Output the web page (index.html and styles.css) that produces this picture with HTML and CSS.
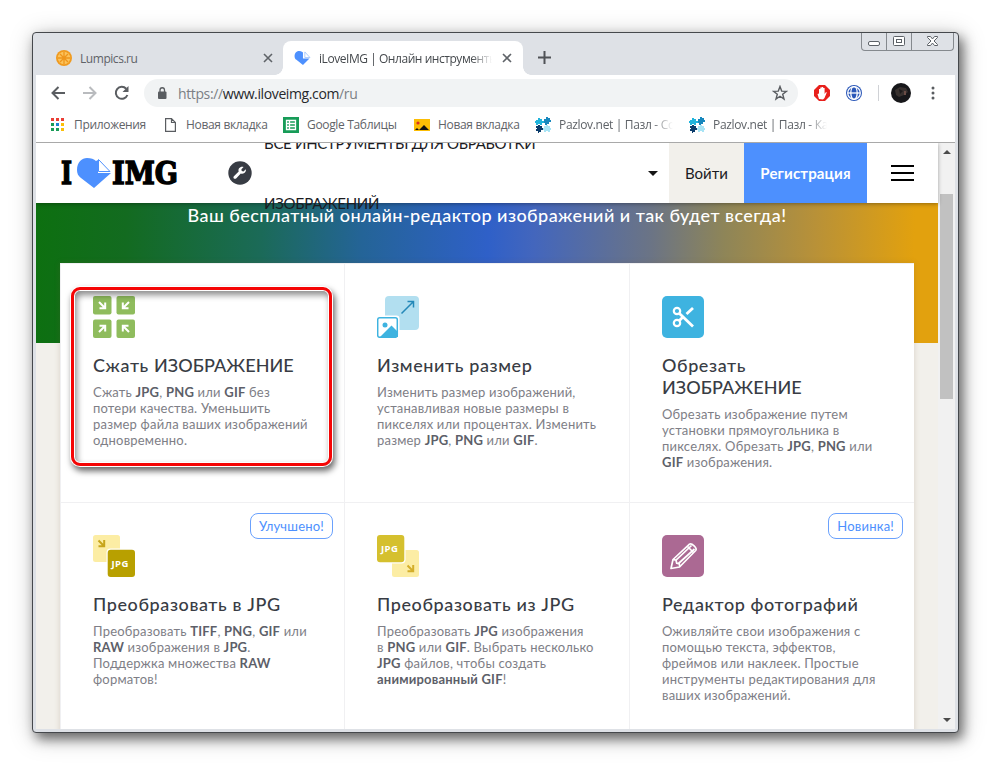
FILE: index.html
```html
<!DOCTYPE html>
<html lang="ru">
<head>
    <meta charset="UTF-8">
    <meta name="viewport" content="width=device-width, initial-scale=1.0">
    <title>iLoveIMG | Онлайн инструменты</title>
    <link rel="stylesheet" href="styles.css">
</head>
<body>
    <svg class="defs" width="0" height="0">
        <symbol id="puzzle" viewBox="0 0 16 16">
            <path fill="#1fb4dc" d="M1 3h2V1h2v1h2v2h2v2H7v2H5V7H3v1H1V6H0V4h1z"/>
            <path fill="#1787bd" d="M9 2h2V0h2v1h2v2h1v2h-2v2h-2v1h-2V6H9z"/>
            <path fill="#0b3c6b" d="M1 9h2V8h2v1h2v2h1v2H6v2H4v1H3v-2H1v-2h1v-1H1z"/>
            <path fill="#a8e4f5" d="M9 9h2V8h2v1h2v2h1v2h-1v2h-2v-1h-2v1H9v-2H8v-2h1z"/>
        </symbol>
        <symbol id="close" viewBox="0 0 10 10">
            <path d="M1 1l8 8M9 1L1 9" stroke="#5f6368" stroke-width="1.6"/>
        </symbol>
    </svg>

    <div class="window">
        <div class="controls">
            <span class="control"><svg width="24" height="17" fill="#fff" stroke="#5c6167"><rect x="6.500" y="8.500" width="11" height="4" rx="1.500"/></svg></span>
            <span class="control"><svg width="24" height="17" fill="#fff" stroke="#5c6167"><rect x="6.500" y="3.500" width="11" height="9" rx="1"/><rect x="9.500" y="6.500" width="5" height="3"/></svg></span>
            <span class="control wide"><svg width="41" height="17" fill="#fff" stroke="#5c6167"><path d="M15.500 3.500h3l2 2.500 2-2.500h3v1L22 8l3.500 3.500v1h-3l-2-2.500-2 2.500h-3v-1L19 8l-3.500-3.500z"/></svg></span>
        </div>

        <div class="tabs">
            <div class="tab">
                <svg width="16" height="16" viewBox="0 0 16 16"><circle cx="8" cy="8" r="8" fill="#f09a1f"/><circle cx="8" cy="8" r="6.200" fill="#fbc35c"/><path d="M8 2v12M2 8h12M4 4l8 8M12 4l-8 8" stroke="#ee951c" stroke-width="1.300"/></svg>
                <span class="tab-title">Lumpics.ru</span>
                <svg class="tab-close" width="10" height="10"><use href="#close"/></svg>
            </div>
            <div class="tab active">
                <svg width="17" height="14" viewBox="0 0 34 30"><path fill="#4d90fe" d="M0 11C0 4 5 0 10 0c5 0 8 3 8 3v13h14L18 30 4 19C1 17 0 14 0 11z"/><path fill="#fff" stroke="#8db8fb" stroke-width="1.500" d="M22 2v12h11z"/></svg>
                <span class="tab-title">iLoveIMG | Онлайн инструменты</span>
                <svg class="tab-close" width="10" height="10"><use href="#close"/></svg>
            </div>
            <svg class="plus" width="13" height="13"><path d="M6.500 0v13M0 6.500h13" stroke="#505357" stroke-width="2"/></svg>
        </div>

        <div class="toolbar">
            <svg class="arrow" width="14" height="14" fill="none" stroke="#5a5d61" stroke-width="2"><path d="M14 7H1.500M7.500 1l-6 6 6 6"/></svg>
            <svg class="arrow" width="14" height="14" fill="none" stroke="#b9bbbe" stroke-width="2"><path d="M0 7h12.500M6.500 1l6 6-6 6"/></svg>
            <svg class="reload" width="16" height="16" fill="none" stroke="#5a5d61" stroke-width="2"><path d="M13.400 10A6 6 0 1 1 12.200 3.700"/><path d="M14.500 1v6h-6z" fill="#5a5d61" stroke="none"/></svg>
            <div class="omnibox">
                <svg width="10" height="12" viewBox="0 0 10 12"><rect x="1" y="4.500" width="8.500" height="7.500" rx="1" fill="#5a5d61"/><path d="M3 5V3a2.200 2.200 0 0 1 4.500 0v2" fill="none" stroke="#5a5d61" stroke-width="1.300"/></svg>
                <span class="url">https://<b>www.iloveimg.com</b>/ru</span>
                <svg class="star" width="16" height="16" viewBox="0 0 16 16" fill="none" stroke="#5a5d61" stroke-width="1.400"><path d="M8 1.500l1.700 4.600 4.800.2-3.800 3 1.300 4.800L8 11.300l-4 2.800 1.300-4.800-3.800-3 4.800-.2z"/></svg>
            </div>
            <svg class="ext" width="16" height="16" viewBox="0 0 16 16"><path d="M5 0h6l5 5v6l-5 5H5l-5-5V5z" fill="#e8201c"/><path d="M5 14L3.500 9 5 8.500V4h1.300V2.500h1.500V2h1.400v1h1.400v6l1.400-2 .8.500L10.500 13 9 14.500z" fill="#fff"/></svg>
            <svg class="ext" width="16" height="16" viewBox="0 0 16 16"><circle cx="8" cy="8" r="8" fill="#2a57b8"/><g fill="none" stroke="#fff" stroke-width="1.300"><circle cx="8" cy="8" r="6.300"/><ellipse cx="8" cy="8" rx="3.200" ry="6.300"/><path d="M2 8h12"/></g></svg>
            <span class="divider"></span>
            <svg class="avatar" width="20" height="20"><circle cx="10" cy="10" r="10" fill="#17171a"/><path d="M4 7l5-3 6 1 2 4-4 3-5 2-3-2z" fill="#38312f"/><path d="M8 6l4 2-3 3z" fill="#1c1a1b"/><path d="M13 8h2v4h-2z" fill="#6a4c46"/></svg>
            <svg width="4" height="14" fill="#5a5d61"><circle cx="2" cy="2" r="1.500"/><circle cx="2" cy="7" r="1.500"/><circle cx="2" cy="12" r="1.500"/></svg>
        </div>

        <div class="bookmarks">
            <div class="bookmark apps">
                <svg width="13" height="13"><path fill="#ea3e35" d="M0 0h3v3H0zM5 0h3v3H5zM10 0h3v3h-3z"/><path fill="#1a9c58" d="M0 5h3v3H0zM0 10h3v3H0zM5 10h3v3H5z"/><path fill="#1e83d3" d="M5 5h3v3H5z"/><path fill="#fbbf09" d="M10 5h3v3h-3zM10 10h3v3h-3z"/></svg>
                <span>Приложения</span>
            </div>
            <div class="bookmark page">
                <svg width="11" height="14" fill="none" stroke="#5a5d61" stroke-width="1.200"><path d="M.6.600h5.900l3.900 3.900v8.900H.6zM6.500.600v3.900h3.900"/></svg>
                <span>Новая вкладка</span>
            </div>
            <div class="bookmark sheets">
                <svg width="16" height="16"><path fill="#179c58" d="M0 0h16v16H0z"/><path fill="none" stroke="#fff" stroke-width="1.300" d="M3.500 3.500h9v9h-9zM6.500 3.500v9M3.500 6.500h9M3.500 9.500h9"/></svg>
                <span>Google Таблицы</span>
            </div>
            <div class="bookmark pic">
                <svg width="16" height="12"><path fill="#fbbd05" d="M0 0h16v12H0z"/><circle cx="4" cy="4" r="1.600" fill="#d93025"/><path d="M1 11l2-2 2 2 5-5 5 5z" fill="#111"/></svg>
                <span>Новая вкладка</span>
            </div>
            <div class="bookmark puzzle">
                <svg width="16" height="16"><use href="#puzzle"/></svg>
                <span class="fade">Pazlov.net | Пазл - Соб</span>
            </div>
            <div class="bookmark puzzle">
                <svg width="16" height="16"><use href="#puzzle"/></svg>
                <span class="fade">Pazlov.net | Пазл - Кар</span>
            </div>
        </div>

        <div class="viewport">
            <div class="site">
                <header class="header">
                    <svg class="logo" width="120" height="32">
                        <text x="1" y="26" textLength="11" lengthAdjust="spacingAndGlyphs">I</text>
                        <path fill="#4d90fe" d="M17 12C17 4 22 0 27 0c4 0 7 1 9 3l2-1v13h13L34 30 21 20C18 18 17 15 17 12z"/>
                        <path fill="#fff" stroke="#4d90fe" d="M38.500 1.500v12l11.500 0z"/>
                        <text x="52" y="26" textLength="66" lengthAdjust="spacingAndGlyphs">IMG</text>
                    </svg>
                    <svg class="wrench" width="24" height="24" viewBox="0 0 24 24"><circle cx="12" cy="12" r="11.700" fill="#383c44"/><path fill="#fff" d="M17.800 8.200l-2.300 2.200-1.800-.3-.3-1.800 2.200-2.300c-1.700-.6-3.500 0-4.500 1.300-.7 1-.8 2.100-.4 3.200l-4.800 4.700c-.6.700-.6 1.600 0 2.200.6.600 1.500.6 2.200 0l4.700-4.800c1.200.4 2.500.2 3.500-.6 1.300-1 1.900-2.500 1.500-3.800z"/></svg>
                    <div class="all-tools">ВСЕ ИНСТРУМЕНТЫ ДЛЯ ОБРАБОТКИ<br>ИЗОБРАЖЕНИЙ</div>
                    <span class="caret"></span>
                    <a class="login">Войти</a>
                    <a class="register">Регистрация</a>
                    <div class="burger"><i></i><i></i><i></i></div>
                </header>

                <div class="hero">Ваш бесплатный онлайн-редактор изображений и так будет всегда!</div>

                <div class="tools">
                    <div class="tool">
                        <svg width="42" height="42"><g fill="#8fbc5d"><rect width="18.500" height="18.500" rx="2"/><rect x="23.500" width="18.500" height="18.500" rx="2"/><rect y="23.500" width="18.500" height="18.500" rx="2"/><rect x="23.500" y="23.500" width="18.500" height="18.500" rx="2"/></g><path d="M6 6l6 6M12.200 6.500v5.700H6.500M36 6l-6 6M29.800 6.500v5.700h5.700M6 36l6-6M12.200 35.500v-5.700H6.500M36 36l-6-6M29.800 35.500v-5.700h5.700" fill="none" stroke="#fff" stroke-width="2"/></svg>
                        <h3>Сжать <span class="caps">ИЗОБРАЖЕНИЕ</span></h3>
                        <p>Сжать <b>JPG</b>, <b>PNG</b> или <b>GIF</b> без<br>потери качества. Уменьшить<br>размер файла ваших изображений<br>одновременно.</p>
                    </div>
                    <div class="tool">
                        <svg width="42" height="42"><rect x="8" width="34" height="34" rx="4" fill="#b2dff0"/><path d="M24.500 17.500L36.500 5.500M30.500 5.500h6v6" fill="none" stroke="#2488b8" stroke-width="1.500"/><rect x="-1.500" y="19.500" width="24" height="24" rx="3" fill="#fff"/><rect x=".7" y="21.700" width="19.600" height="19.600" rx="2" fill="#fff" stroke="#3eb3e0" stroke-width="1.500"/><circle cx="8" cy="29" r="2.500" fill="#3eb3e0"/><path d="M3 41l11.500-11.500L21 36v5z" fill="#3eb3e0"/></svg>
                        <h3>Изменить размер</h3>
                        <p>Изменить размер изображений,<br>устанавливая новые размеры в<br>пикселях или процентах. Изменить<br>размер <b>JPG</b>, <b>PNG</b> или <b>GIF</b>.</p>
                    </div>
                    <div class="tool">
                        <svg width="42" height="42"><rect width="42" height="42" rx="5" fill="#3eb3e0"/><g fill="none" stroke="#fff" stroke-width="2.200"><circle cx="15" cy="15" r="3.200"/><circle cx="15" cy="27" r="3.200"/><path d="M17.200 17.300L31 30.500M17.200 24.700l4-4M24.500 18L31 12" stroke-width="2.800"/></g></svg>
                        <h3>Обрезать<br><span class="caps">ИЗОБРАЖЕНИЕ</span></h3>
                        <p>Обрезать изображение путем<br>установки прямоугольника в<br>пикселях. Обрезать <b>JPG</b>, <b>PNG</b> или<br><b>GIF</b> изображения.</p>
                    </div>
                    <div class="tool">
                        <span class="badge">Улучшено!</span>
                        <svg width="42" height="42"><rect width="27" height="27" rx="2.500" fill="#fceda4"/><path d="M5.500 5.500l5.500 5.500M11.200 5v6.200H5.500" fill="none" stroke="#c7a51c" stroke-width="2"/><rect x="13.500" y="13.500" width="30" height="30" rx="4" fill="#fff"/><rect x="14.700" y="14.700" width="27.300" height="27.300" rx="3" fill="#b8a000"/><text class="jpg" x="18.500" y="32">JPG</text></svg>
                        <h3>Преобразовать в JPG</h3>
                        <p>Преобразовать <b>TIFF</b>, <b>PNG</b>, <b>GIF</b> или<br><b>RAW</b> изображения в <b>JPG</b>.<br>Поддержка множества <b>RAW</b><br>форматов!</p>
                    </div>
                    <div class="tool">
                        <svg width="42" height="42"><rect x="15" y="15" width="27" height="27" rx="2.500" fill="#fceda4"/><path d="M30.500 30.500l5.500 5.500M36.200 30v6.200h-5.700" fill="none" stroke="#d3ae2b" stroke-width="2"/><rect x="-2" y="-2" width="30.500" height="30.500" rx="4" fill="#fff"/><rect width="27.300" height="27.300" rx="3" fill="#d5c02e"/><text class="jpg" x="4" y="17">JPG</text></svg>
                        <h3>Преобразовать из JPG</h3>
                        <p>Преобразовать <b>JPG</b> изображения<br>в <b>PNG</b> или <b>GIF</b>. Выбрать несколько<br><b>JPG</b> файлов, чтобы создать<br><b>анимированный GIF</b>!</p>
                    </div>
                    <div class="tool">
                        <span class="badge">Новинка!</span>
                        <svg width="42" height="42"><rect width="42" height="42" rx="5" fill="#ab6993"/><g fill="none" stroke="#fff" stroke-width="1.700" stroke-linejoin="round"><path d="M9 33.500l2-9L27.500 9.200c2-1.600 8.200 4 6.200 6.300L17.500 32z"/><path d="M11 24.500l3 .7.700 3 2.600.6.500 3M14 25.200L29.500 10.500M16.500 28.500L32.500 14M25.500 11.500l6 6"/></g></svg>
                        <h3>Редактор фотографий</h3>
                        <p>Оживляйте свои изображения с<br>помощью текста, эффектов,<br>фреймов или наклеек. Простые<br>инструменты редактирования для<br>ваших изображений.</p>
                    </div>
                </div>
            </div>
            <div class="scrollbar">
                <span class="up"></span>
                <span class="thumb"></span>
                <span class="down"></span>
            </div>
        </div>

        <div class="highlight"></div>
    </div>
</body>
</html>
```
FILE: styles.css
```css
* {
    box-sizing: border-box;
}
body {
    margin: 0;
    padding: 32px;
    height: 765px;
    overflow: hidden;
    background: #fff;
    font-family: "Open Sans", "Noto Sans", sans-serif;
    font-size: 12px;
    color: #5f6368;
}
svg {
    display: block;
    flex: none;
}
.defs {
    position: absolute;
}

/* Browser window */
.window {
    position: relative;
    display: flex;
    flex-direction: column;
    width: 927px;
    height: 701px;
    padding: 0 3px 3px;
    border: 1px solid #45484c;
    border-radius: 4px;
    background: #dee1e6;
    box-shadow: 4px 6px 12px rgba(0, 0, 0, 0.5), 2px 4px 24px rgba(0, 0, 0, 0.25);
}
.controls {
    position: absolute;
    top: 0;
    right: 4px;
    display: flex;
    height: 18px;
    border: 1px solid #85898e;
    border-top: 0;
    border-radius: 0 0 4px 4px;
}
.control + .control {
    border-left: 1px solid #85898e;
}
.tabs {
    display: flex;
    align-items: flex-end;
    height: 42px;
}
.tab {
    position: relative;
    display: flex;
    align-items: center;
    width: 240px;
    height: 34px;
    padding: 0 11px;
}
.tab:first-child {
    width: 247px;
    padding: 0 10px 0 20px;
}
.tab.active {
    background: #fff;
    border-radius: 8px 8px 0 0;
    color: #45494d;
}
/* flared bottom corners */
.tab.active::before,
.tab.active::after {
    content: "";
    position: absolute;
    bottom: 0;
    left: -8px;
    width: 8px;
    height: 8px;
    background: radial-gradient(circle at 0 0, transparent 7.5px, #fff 8px);
}
.tab.active::after {
    left: 100%;
    background: radial-gradient(circle at 100% 0, transparent 7.5px, #fff 8px);
}
.tab-title {
    flex: 1;
    margin: 0 10px 0 8px;
    overflow: hidden;
    white-space: nowrap;
    letter-spacing: -0.45px;
}
.active .tab-title {
    -webkit-mask-image: linear-gradient(90deg, #000 88%, transparent);
    mask-image: linear-gradient(90deg, #000 88%, transparent);
}
.plus {
    margin: 0 0 11px 15px;
}
.toolbar {
    display: flex;
    align-items: center;
    height: 36px;
    padding-left: 15px;
    background: #fff;
}
.arrow {
    margin-right: 18px;
}
.reload {
    margin: 0 14px 0 -1px;
}
.omnibox {
    display: flex;
    align-items: center;
    width: 654px;
    height: 28px;
    padding: 0 10px 0 13px;
    border-radius: 14px;
    background: #f1f3f4;
}
.url {
    flex: 1;
    margin-left: 11px;
    font-size: 14px;
    letter-spacing: -0.38px;
    color: #7b7f84;
}
.url b {
    font-weight: normal;
    color: #26282b;
}
.ext {
    margin-left: 16px;
}
.divider {
    width: 1px;
    height: 16px;
    margin: 0 12px 0 16px;
    background: #d0d2d6;
}
.avatar {
    margin-right: 20px;
}
.bookmarks {
    display: flex;
    align-items: center;
    height: 32px;
    padding: 0 0 4px 15px;
    border-bottom: 1px solid #a9a9a9;
    background: #fff;
    letter-spacing: -0.33px;
}
.bookmark {
    display: flex;
    align-items: center;
    gap: 8px;
    white-space: nowrap;
}
.apps {
    gap: 10px;
    width: 114px;
}
.page {
    gap: 10px;
    width: 118px;
}
.sheets {
    width: 131px;
}
.pic {
    width: 121px;
}
.puzzle {
    width: 154px;
}
.fade {
    width: 114px;
    overflow: hidden;
    -webkit-mask-image: linear-gradient(90deg, #000 82%, transparent);
    mask-image: linear-gradient(90deg, #000 82%, transparent);
}

/* Page */
.viewport {
    display: flex;
    flex: 1;
    min-height: 0;
    overflow: hidden;
    font-family: Lato, sans-serif;
}
.site {
    width: 902px;
    background: #f2f0eb;
}
.header {
    position: relative;
    display: flex;
    align-items: center;
    height: 60px;
    padding-left: 24px;
    background: #fff;
    color: #1b1b1f;
    box-shadow: 0 1px 4px rgba(0, 0, 0, 0.35);
}
.logo {
    margin-top: 2px;
    font-family: "DejaVu Serif", serif;
    font-size: 32px;
    font-weight: bold;
    overflow: visible;
}
.logo text {
    stroke: #000;
    stroke-width: 1.5px;
}
.wrench {
    margin-left: 48px;
}
.all-tools {
    width: 377px;
    margin-left: 12px;
    font-size: 15px;
    letter-spacing: -0.3px;
    line-height: 60px;
    white-space: nowrap;
}
.caret {
    margin: 0 11px 0 7px;
    border: 5px solid transparent;
    border-top-color: #161616;
    border-bottom: 0;
}
.login,
.register {
    width: 75px;
    line-height: 61px;
    height: 60px;
    text-align: center;
    font-size: 15px;
    background: #f2f0eb;
}
.register {
    width: 123px;
    font-weight: bold;
    letter-spacing: 0.15px;
    color: #fff;
    background: #4d90fe;
}
.burger {
    display: grid;
    gap: 5px;
    width: 23px;
    margin: -1px 0 0 24px;
}
.burger i {
    height: 2px;
    background: #000;
}
.hero {
    height: 140px;
    line-height: 25px;
    text-align: center;
    font-size: 18px;
    font-weight: 500;
    letter-spacing: 0.45px;
    color: #fff;
    background: linear-gradient(92deg, #0d7010 0%, #136b20 10%, #1b6a58 25%, #246497 36%, #2f60c8 50%, #4366bd 55%, #6b7485 68%, #8e8558 76%, #b89138 86%, #e2a10e 97%);
}
.tools {
    position: relative;
    display: grid;
    grid-template-columns: 284px 285px 285px;
    grid-auto-rows: 239px;
    width: 854px;
    margin: -80px auto 0;
    background: #fff;
    box-shadow: 0 0 6px rgba(120, 90, 60, 0.2);
}
.tool {
    position: relative;
    padding: 32px;
    border-top: 1px solid #f0f0f2;
    border-left: 1px solid #f0f0f2;
}
.tool h3 {
    margin: 16px 0 8px;
    font-size: 18px;
    font-weight: 500;
    line-height: 22px;
    letter-spacing: 0.6px;
    white-space: nowrap;
    color: #383c44;
}
.tool .caps {
    letter-spacing: 0.05px;
}
.tool p {
    margin: 0;
    font-size: 13px;
    line-height: 16px;
    letter-spacing: 0.2px;
    white-space: nowrap;
    color: #7e7e86;
}
.tool b {
    color: #5d5f69;
}
.jpg {
    font-family: "Open Sans", sans-serif;
    font-size: 9.5px;
    font-weight: bold;
    letter-spacing: 0.4px;
    fill: #fff;
}
.badge {
    position: absolute;
    top: 10px;
    right: 11px;
    padding: 0 8px;
    border: 1px solid #6aa1fd;
    border-radius: 8px;
    line-height: 24px;
    font-size: 13px;
    letter-spacing: 0.2px;
    color: #4d90fe;
}
.scrollbar {
    display: flex;
    flex-direction: column;
    align-items: center;
    width: 17px;
    background: #f1f1f1;
}
.up,
.down {
    margin-top: 7px;
    border: 4px solid transparent;
    border-bottom-color: #4b4b4b;
    border-top: 0;
}
.thumb {
    width: 13px;
    height: 205px;
    margin-top: 40px;
    background: #c1c1c1;
}
.down {
    margin: auto 0 7px;
    border: 4px solid transparent;
    border-top-color: #4b4b4b;
    border-bottom: 0;
}

/* Red frame over the first tool */
.highlight {
    position: absolute;
    left: 38px;
    top: 254px;
    width: 261px;
    height: 179px;
    border: 3px solid #f50505;
    border-radius: 9px;
    box-shadow: 0 0 0 1px #fff, inset 0 0 0 1px #fff, 2px 4px 6px 1px rgba(0, 0, 0, 0.6), inset 2px 4px 6px 1px rgba(0, 0, 0, 0.45);
}
```
